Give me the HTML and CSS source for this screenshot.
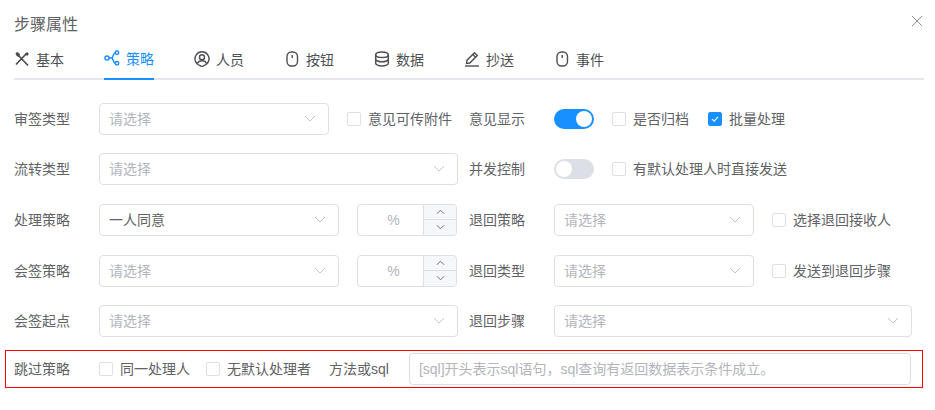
FILE: index.html
```html
<!DOCTYPE html>
<html lang="zh-CN">
<head>
<meta charset="utf-8">
<title>步骤属性</title>
<link rel="stylesheet" href="styles.css">
</head>
<body>
<div class="dialog">
  <header class="head">
    <span class="title">步骤属性</span>
    <svg class="close" width="12" height="12" viewBox="0 0 12 12"><path d="M1 1l10 10M11 1L1 11" stroke="#909399" fill="none"/></svg>
  </header>
  <nav class="tabs">
    <div class="tab"><svg class="ico" viewBox="0 0 16 16"><path d="M5 5l9 9.500M12.500 2.500L2 13.500" stroke="currentColor" stroke-width="1.800" fill="none"/><path d="M1.500 2.200L3 1c1.500.4 3 1.800 3.200 3.300L4.500 6C3 5.600 1.800 4 1.500 2.200zM11 3l2-2 2 2-2 2z" fill="currentColor"/></svg>基本</div>
    <div class="tab active"><svg class="ico" viewBox="0 0 16 16"><g stroke="currentColor" stroke-width="1.500" fill="none"><circle cx="3" cy="8" r="2"/><circle cx="13" cy="2.800" r="1.700"/><circle cx="13" cy="13.200" r="1.700"/><path d="M5 8h2.500c2 0 1.500-5.200 3.800-5.200M7.500 8c2 0 1.500 5.200 3.800 5.200"/></g></svg>策略</div>
    <div class="tab"><svg class="ico" viewBox="0 0 16 16"><g stroke="currentColor" stroke-width="1.400" fill="none"><path d="M6.300 14.600A7 7 0 1 1 9.700 14.600L8 15.800z"/><circle cx="8" cy="6.200" r="2.500"/><path d="M3.500 12.500C4.200 10.500 6 9.800 8 9.800s3.800.7 4.500 2.700"/></g></svg>人员</div>
    <div class="tab"><svg class="ico" viewBox="0 0 16 16"><g stroke="currentColor" stroke-width="1.400" fill="none"><rect x="3" y="1" width="10.500" height="14" rx="4.500"/><path d="M8.200 4v3"/></g></svg>按钮</div>
    <div class="tab"><svg class="ico" viewBox="0 0 16 16"><g stroke="currentColor" stroke-width="1.500" fill="none"><ellipse cx="8" cy="3.800" rx="6.300" ry="2.800"/><path d="M1.700 3.800v8.400c0 1.500 2.800 2.800 6.300 2.800s6.300-1.300 6.300-2.800V3.800M1.700 8c0 1.500 2.800 2.800 6.300 2.800s6.300-1.300 6.300-2.800"/></g></svg>数据</div>
    <div class="tab"><svg class="ico" viewBox="0 0 16 16"><g stroke="currentColor" stroke-width="1.400" fill="none"><path d="M2.500 12.500l.5-3.300L10.500 1.700l2.800 2.800-7.500 7.500zM8.800 3.400l2.800 2.800"/><path d="M1 15h14"/></g></svg>抄送</div>
    <div class="tab"><svg class="ico" viewBox="0 0 16 16"><g stroke="currentColor" stroke-width="1.400" fill="none"><rect x="3" y="1" width="10.500" height="14" rx="4.500"/><path d="M8.200 4v3"/></g></svg>事件</div>
  </nav>

  <form class="form">
    <div class="row">
      <div class="col">
        <label class="lbl">审签类型</label>
        <div class="select w230"><span class="ph">请选择</span><svg class="arrow" viewBox="0 0 12 7"><path d="M1 1l5 5 5-5"/></svg></div>
        <span class="check ml18"><i class="box"></i>意见可传附件</span>
      </div>
      <div class="col">
        <label class="lbl">意见显示</label>
        <span class="switch on"><i></i></span>
        <span class="check ml18"><i class="box"></i>是否归档</span>
        <span class="check ml19"><i class="box checked"><svg viewBox="0 0 14 14"><path d="M3.500 7l2.500 2.500 4.500-5"/></svg></i>批量处理</span>
      </div>
    </div>
    <div class="row">
      <div class="col">
        <label class="lbl">流转类型</label>
        <div class="select w359"><span class="ph">请选择</span><svg class="arrow" viewBox="0 0 12 7"><path d="M1 1l5 5 5-5"/></svg></div>
      </div>
      <div class="col">
        <label class="lbl">并发控制</label>
        <span class="switch"><i></i></span>
        <span class="check ml18"><i class="box"></i>有默认处理人时直接发送</span>
      </div>
    </div>
    <div class="row">
      <div class="col">
        <label class="lbl">处理策略</label>
        <div class="select w240"><span class="val">一人同意</span><svg class="arrow" viewBox="0 0 12 7"><path d="M1 1l5 5 5-5"/></svg></div>
        <div class="num"><span class="pct">%</span><span class="step"><b><svg viewBox="0 0 10 6"><path d="M1 5l4-4 4 4"/></svg></b><b><svg viewBox="0 0 10 6"><path d="M1 1l4 4 4-4"/></svg></b></span></div>
      </div>
      <div class="col">
        <label class="lbl">退回策略</label>
        <div class="select w200"><span class="ph">请选择</span><svg class="arrow" viewBox="0 0 12 7"><path d="M1 1l5 5 5-5"/></svg></div>
        <span class="check ml18"><i class="box"></i>选择退回接收人</span>
      </div>
    </div>
    <div class="row">
      <div class="col">
        <label class="lbl">会签策略</label>
        <div class="select w240"><span class="ph">请选择</span><svg class="arrow" viewBox="0 0 12 7"><path d="M1 1l5 5 5-5"/></svg></div>
        <div class="num"><span class="pct">%</span><span class="step"><b><svg viewBox="0 0 10 6"><path d="M1 5l4-4 4 4"/></svg></b><b><svg viewBox="0 0 10 6"><path d="M1 1l4 4 4-4"/></svg></b></span></div>
      </div>
      <div class="col">
        <label class="lbl">退回类型</label>
        <div class="select w200"><span class="ph">请选择</span><svg class="arrow" viewBox="0 0 12 7"><path d="M1 1l5 5 5-5"/></svg></div>
        <span class="check ml18"><i class="box"></i>发送到退回步骤</span>
      </div>
    </div>
    <div class="row">
      <div class="col">
        <label class="lbl">会签起点</label>
        <div class="select w359"><span class="ph">请选择</span><svg class="arrow" viewBox="0 0 12 7"><path d="M1 1l5 5 5-5"/></svg></div>
      </div>
      <div class="col">
        <label class="lbl">退回步骤</label>
        <div class="select w358"><span class="ph">请选择</span><svg class="arrow" viewBox="0 0 12 7"><path d="M1 1l5 5 5-5"/></svg></div>
      </div>
    </div>
    <div class="skip">
      <label class="lbl">跳过策略</label>
      <span class="check"><i class="box"></i>同一处理人</span>
      <span class="check ml16"><i class="box"></i>无默认处理者</span>
      <span class="sql">方法或sql</span>
      <div class="input"><span class="ph">[sql]开头表示sql语句，sql查询有返回数据表示条件成立。</span></div>
    </div>
  </form>
</div>
</body>
</html>
```
FILE: styles.css
```css
* { box-sizing: border-box; }
html, body { margin: 0; padding: 0; background: #fff; }
body {
  width: 935px;
  height: 410px;
  overflow: hidden;
  font-family: "Liberation Sans", "Noto Sans CJK SC", sans-serif;
  font-size: 14px;
  color: #606266;
}
.dialog { padding: 0 11px 0 14px; }
.head {
  height: 40px;
  display: flex;
  align-items: center;
  justify-content: space-between;
  padding-top: 10px;
}
.title { font-size: 16px; color: #606266; line-height: 20px; }
.close { margin: -8px 1px 0 0; }
.tabs {
  display: flex;
  gap: 40px;
  height: 40px;
  border-bottom: 2px solid #e4e7ed;
}
.tab {
  display: flex;
  align-items: center;
  gap: 6px;
  width: 50px;
  height: 40px;
  padding-bottom: 2px;
  color: #4d4f53;
  white-space: nowrap;
  flex: none;
}
.tab.active { color: #1890ff; border-bottom: 2px solid #1890ff; }
.ico { width: 16px; height: 16px; flex: none; }
.form { padding-top: 23px; }
.row { display: flex; height: 32px; margin-bottom: 19px; }
.row:nth-child(1), .row:nth-child(4) { margin-bottom: 18px; }
.row:nth-child(5) { margin-bottom: 13px; }
.col { display: flex; align-items: center; }
.col:first-child { width: 455px; flex: none; }
.lbl { width: 85px; flex: none; color: #606266; padding-bottom: 2px; }
.select, .input {
  height: 32px;
  border: 1px solid #dcdfe6;
  border-radius: 4px;
  display: flex;
  align-items: center;
  justify-content: space-between;
  padding: 0 10px 0 9px;
  background: #fff;
  flex: none;
}
.w230 { width: 230px; }
.w240 { width: 240px; }
.w200 { width: 200px; }
.w359 { width: 359px; }
.w358 { width: 358px; }
.ph { color: #b2b5bb; padding-bottom: 2px; }
.val { color: #606266; padding-bottom: 2px; }
.arrow { width: 12px; height: 7px; margin: -1px 2px 0 0; fill: none; stroke: #c0c4cc; stroke-width: 1; }
.check { display: inline-flex; align-items: center; white-space: nowrap; color: #606266; line-height: 20px; padding-bottom: 1px; }
.box {
  width: 14px;
  height: 14px;
  border: 1px solid #dcdfe6;
  border-radius: 2px;
  margin-right: 7px;
  background: #fff;
  flex: none;
  display: block;
}
.box.checked { background: #1890ff; border-color: #1890ff; }
.box.checked svg { display: block; width: 12px; height: 12px; fill: none; stroke: #fff; stroke-width: 1.2; }
.ml18 { margin-left: 18px; }
.ml19 { margin-left: 19px; }
.ml16 { margin-left: 16px; }
.switch {
  width: 40px;
  height: 20px;
  border-radius: 10px;
  background: #dcdfe6;
  display: flex;
  align-items: center;
  padding: 0 2px;
  flex: none;
}
.switch i { width: 16px; height: 16px; border-radius: 50%; background: #fff; display: block; }
.switch.on { background: #1890ff; justify-content: flex-end; }
.num {
  width: 100px;
  height: 32px;
  margin: -1px 0 0 18px;
  border: 1px solid #dcdfe6;
  border-radius: 4px;
  display: flex;
  flex: none;
  overflow: hidden;
}
.pct { flex: 1; text-align: center; line-height: 30px; color: #b2b5bb; padding-left: 6px; }
.step { width: 33px; display: flex; flex-direction: column; background: #f5f7fa; border-left: 1px solid #dcdfe6; }
.step b { flex: 1; display: flex; align-items: center; justify-content: center; }
.step b + b { border-top: 1px solid #dcdfe6; }
.step svg { width: 9px; height: 6px; fill: none; stroke: #606266; stroke-width: 1; }
.skip {
  margin: 0 0 0 -9px;
  width: 918px;
  height: 38px;
  border: 1px solid #f00;
  display: flex;
  align-items: center;
  padding: 0 11px 0 8px;
}
.sql { margin: 0 20px 0 18px; white-space: nowrap; flex: none; padding-bottom: 2px; }
.input { flex: 1; }
```
